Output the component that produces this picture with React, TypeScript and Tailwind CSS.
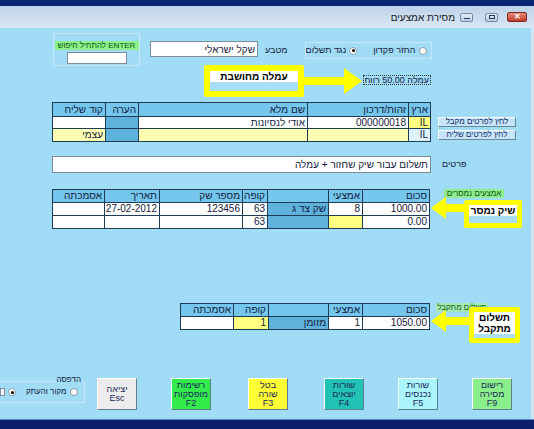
import React from 'react';

const FONT = "font-['Liberation_Sans',Arial,sans-serif]";

const HEAD = 'bg-[#74c6ec]';
const BLUE = 'bg-[#5eb2dc]';
const PALE = 'bg-[#ffffb4]';
const YEL = 'bg-[#ffff80]';

type CellProps = { bg?: string; children?: React.ReactNode };

const C: React.FC<CellProps> = ({ bg = 'bg-white', children }) => (
  <div dir="rtl" className={`${bg} px-[2px] flex items-center overflow-hidden whitespace-nowrap leading-none`}>
    {children}
  </div>
);

const Radio: React.FC<{ on?: boolean }> = ({ on }) => (
  <span className="w-[8px] h-[8px] rounded-full bg-white border border-[#8c9aa6] flex items-center justify-center shrink-0">
    {on && <span className="w-[3px] h-[3px] rounded-full bg-black" />}
  </span>
);

const Arrow: React.FC<{ w: number; h: number; left?: boolean }> = ({ w, h, left }) => {
  const head = Math.round(h * 0.7);
  const s1 = h / 2 - 4;
  const s2 = h / 2 + 4;
  const pts = left
    ? `0,${h / 2} ${head},0 ${head},${s1} ${w},${s1} ${w},${s2} ${head},${s2} ${head},${h}`
    : `0,${s1} ${w - head},${s1} ${w - head},0 ${w},${h / 2} ${w - head},${h} ${w - head},${s2} 0,${s2}`;
  return (
    <svg width={w} height={h} viewBox={`0 0 ${w} ${h}`}>
      <polygon points={pts} fill="#ffff00" />
    </svg>
  );
};

const FKey: React.FC<{ bg: string; lines: string[]; className?: string }> = ({ bg, lines, className = '' }) => (
  <div
    dir="rtl"
    className={`${bg} ${className} w-[40px] h-[32px] shrink-0 flex flex-col items-center justify-center leading-[9px] text-[9px] text-[#1c2a5c] whitespace-nowrap border border-t-white border-l-white border-b-[#5d7f90] border-r-[#5d7f90]`}
  >
    {lines.map((l) => (
      <span key={l}>{l}</span>
    ))}
  </div>
);

export default function App() {
  return (
    <div className={`w-[534px] h-[429px] overflow-hidden bg-[#a0dcf6] ${FONT} text-[9px] text-[#141a3c] flex flex-col`}>
      <div className="h-[6px] bg-[#0b2573]" />

      {/* title bar */}
      <div className="h-[22px] bg-gradient-to-b from-[#bcd2ea] to-[#dbe7f4] flex items-center justify-end pr-[7px]">
        <span dir="rtl" className="text-[10px] text-[#1a1a1a] mr-[5px] whitespace-nowrap">מסירת אמצעים</span>
        <div className="w-[13px] h-[9px] rounded-[2px] border border-[#6f8aa8] bg-gradient-to-b from-[#e6eef7] to-[#b8cbe0] flex items-end justify-center pb-[2px]">
          <span className="w-[6px] h-[1px] bg-[#2a3a50]" />
        </div>
        <div className="w-[13px] h-[9px] ml-[12px] rounded-[2px] border border-[#6f8aa8] bg-gradient-to-b from-[#e6eef7] to-[#b8cbe0] flex items-center justify-center">
          <span className="w-[6px] h-[4px] border border-[#2a3a50]" />
        </div>
        <div className="w-[20px] h-[10px] ml-[9px] rounded-[2px] border border-[#7a2a22] bg-gradient-to-b from-[#e58a7a] to-[#c23a26] flex items-center justify-center text-white text-[8px] font-bold leading-none">
          ✕
        </div>
      </div>

      {/* body */}
      <div className="flex-1 relative flex flex-col border-r-[3px] border-[#cfe4f3] whitespace-nowrap">
        {/* band A */}
        <div className="mt-[5px] h-[33px] flex items-start">
          <div className="ml-[53px] w-[87px] h-[33px] border border-[#c8e8f7] flex flex-col items-center pt-[7px]">
            <div dir="rtl" className="w-[84px] h-[9px] bg-[#8cf08c] text-[#0a5a0a] text-[8px] leading-[9px] text-center overflow-hidden">
              ENTER להתחיל חיפוש
            </div>
            <div className="w-[60px] h-[12px] mt-[2px] bg-white border border-[#7c8c98]" />
          </div>
          <div dir="rtl" className="ml-[10px] mt-[8px] w-[108px] h-[16px] bg-white border border-[#7c8c98] px-[2px] flex items-center text-[10px]">
            שקל ישראלי
          </div>
          <span dir="rtl" className="ml-[7px] mt-[11px]">מטבע</span>
          <div dir="rtl" className="ml-[17px] mt-[9px] w-[127px] h-[17px] border border-[#c8e8f7] flex items-center gap-[3px] pr-[4px]">
            <Radio />
            <span>החזר פקדון</span>
            <span className="w-[10px]" />
            <Radio on />
            <span>נגד תשלום</span>
          </div>
        </div>

        {/* band B */}
        <div className="mt-[9px] h-[10px] flex">
          <div dir="rtl" className="ml-[363px] w-[68px] h-[10px] border border-dotted border-[#333] flex items-center px-[1px] leading-none overflow-hidden">
            עמלה 50.00 רווח
          </div>
        </div>

        {/* band C: parties */}
        <div className="mt-[17px] h-[40px] flex items-start">
          <div className="ml-[52px] grid grid-cols-[52px_32px_168px_100px_21px] grid-rows-[13px_11px_12px] gap-px bg-[#1e3c55] p-px text-[10px]">
            <C bg={HEAD}>קוד שליח</C>
            <C bg={HEAD}>הערה</C>
            <C bg={HEAD}>שם מלא</C>
            <C bg={HEAD}>זהות/דרכון</C>
            <C bg={HEAD}>ארץ</C>
            <C />
            <C bg={BLUE} />
            <C>אודי לנסיונות</C>
            <C>000000018</C>
            <C bg={YEL}>IL</C>
            <C bg={PALE}>עצמי</C>
            <C bg={BLUE} />
            <C bg={PALE} />
            <C bg={PALE} />
            <C bg="bg-[#dff2fb]">IL</C>
          </div>
          <div className="ml-[7px] mt-[15px] flex flex-col gap-[3px]">
            {['לחץ לפרטים מקבל', 'לחץ לפרטים שליח'].map((t) => (
              <div
                key={t}
                dir="rtl"
                className="w-[78px] h-[10px] bg-[#c4e6f8] text-[#1c2a6c] text-[8px] leading-none flex items-center justify-center border border-t-white border-l-white border-b-[#6a8898] border-r-[#6a8898]"
              >
                {t}
              </div>
            ))}
          </div>
        </div>

        {/* band D */}
        <div className="mt-[14px] h-[17px] flex items-center">
          <div dir="rtl" className="ml-[52px] w-[379px] h-[17px] bg-white border border-[#7c8c98] px-[2px] flex items-center text-[10px]">
            תשלום עבור שיק שחזור + עמלה
          </div>
          <span dir="rtl" className="ml-[11px]">פרטים</span>
        </div>

        {/* band E: handed over */}
        <div className="mt-[16px] h-[40px] flex items-start">
          <div className="ml-[52px] grid grid-cols-[51px_54px_82px_24px_60px_33px_66px] grid-rows-[12px_12px_12px] gap-px bg-[#1e3c55] p-px text-[10px]">
            <C bg={HEAD}>אסמכתה</C>
            <C bg={HEAD}>תאריך</C>
            <C bg={HEAD}>מספר שק</C>
            <C bg={HEAD}>קופה</C>
            <C bg={HEAD} />
            <C bg={HEAD}>אמצעי</C>
            <C bg={HEAD}>סכום</C>
            <C />
            <C>27-02-2012</C>
            <C>123456</C>
            <C>63</C>
            <C bg={BLUE}>שק צד ג</C>
            <C>8</C>
            <C>1000.00</C>
            <C />
            <C />
            <C />
            <C>63</C>
            <C bg={BLUE} />
            <C bg={YEL} />
            <C>0.00</C>
          </div>
          <div dir="rtl" className="ml-[14px] w-[60px] h-[9px] bg-[#90ec90] text-[#0a5a0a] text-[8px] leading-[9px] text-center">
            אמצעים נמסרים
          </div>
        </div>

        {/* band F: received */}
        <div className="mt-[74px] h-[26px] flex items-start">
          <div className="ml-[180px] grid grid-cols-[52px_34px_59px_33px_66px] grid-rows-[12px_12px] gap-px bg-[#1e3c55] p-px text-[10px]">
            <C bg={HEAD}>אסמכתה</C>
            <C bg={HEAD}>קופה</C>
            <C bg={HEAD} />
            <C bg={HEAD}>אמצעי</C>
            <C bg={HEAD}>סכום</C>
            <C />
            <C bg={YEL}>1</C>
            <C bg={BLUE}>מזומן</C>
            <C>1</C>
            <C>1050.00</C>
          </div>
          <div dir="rtl" className="ml-[6px] w-[52px] h-[9px] bg-[#a6e8b8] text-[#0a6a0a] text-[8px] leading-[9px] text-center">
            תשלום מתקבל
          </div>
        </div>

        {/* band G: function keys */}
        <div className="mt-[49px] h-[32px] flex items-start">
          <div className="relative w-[85px] h-[22px] border border-[#c8e8f7] border-l-0 mt-[3px] flex items-center justify-end gap-[3px] pr-[5px] text-[8px]" dir="rtl">
            <span className="absolute -top-[6px] right-[2px] bg-[#a0dcf6] px-[1px] text-[8px] leading-none">הדפסה</span>
            <Radio />
            <span>מקור והעתק</span>
            <span className="w-[4px]" />
            <Radio on />
            <span className="w-[5px] h-[8px] bg-white border border-[#7c8c98]" />
          </div>
          <FKey bg="bg-[#ececec]" className="ml-[12px]" lines={['יציאה', 'Esc']} />
          <FKey bg="bg-[#33ec4c]" className="ml-[34px]" lines={['רשימות', 'מופסקות', 'F2']} />
          <FKey bg="bg-[#ffff33]" className="ml-[37px]" lines={['בטל', 'שורה', 'F3']} />
          <FKey bg="bg-[#22c2b4]" className="ml-[36px]" lines={['שורות', 'יוצאים', 'F4']} />
          <FKey bg="bg-[#aaf4fc]" className="ml-[34px]" lines={['שורות', 'נכנסים', 'F5']} />
          <FKey bg="bg-[#8aee8a]" className="ml-[34px]" lines={['רישום', 'מסירה', 'F9']} />
        </div>

        {/* annotations (overlay) */}
        <div className="absolute left-[204px] top-[37px] w-[100px] h-[32px] border-[6px] border-[#ffff00] rounded-[2px] bg-[#a8def6] flex flex-col">
          <div dir="rtl" className="h-[11px] bg-white font-bold text-[10px] leading-none flex items-center justify-center text-black">
            עמלה מחושבת
          </div>
        </div>
        <div className="absolute left-[304px] top-[40px]">
          <Arrow w={58} h={26} />
        </div>

        <div className="absolute left-[464px] top-[172px] w-[58px] h-[28px] border-[5px] border-[#ffff00] rounded-[2px] bg-[#a8def6] flex flex-col">
          <div dir="rtl" className="h-[11px] bg-white font-bold text-[10px] leading-none flex items-center justify-center text-black">
            שיק נמסר
          </div>
        </div>
        <div className="absolute left-[431px] top-[169px]">
          <Arrow w={34} h={22} left />
        </div>

        <div className="absolute left-[469px] top-[279px] w-[51px] h-[36px] border-[5px] border-[#ffff00] rounded-[2px] bg-[#a8def6] flex flex-col">
          <div dir="rtl" className="h-[22px] bg-white font-bold text-[10px] leading-[11px] flex flex-col items-center justify-center text-black">
            <span>תשלום</span>
            <span>מתקבל</span>
          </div>
        </div>
        <div className="absolute left-[431px] top-[282px]">
          <Arrow w={39} h={22} left />
        </div>
      </div>

      <div className="h-[10px] bg-[#0c1f6c] border-t border-[#5a86c4]" />
    </div>
  );
}
